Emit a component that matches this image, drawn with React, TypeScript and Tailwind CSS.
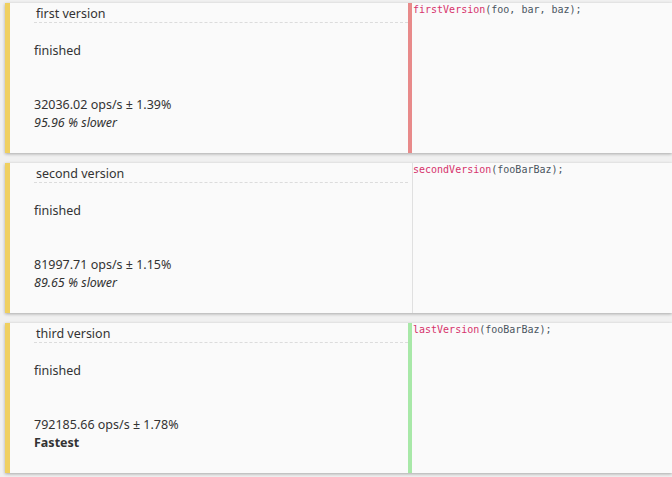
const results = [
    {
        title: 'first version',
        fn: 'firstVersion',
        args: 'foo, bar, baz',
        ops: '32036.02 ops/s ± 1.39%',
        note: '95.96 % slower',
        fastest: false,
        bar: 'border-l-[#e88a8a]',
    },
    {
        title: 'second version',
        fn: 'secondVersion',
        args: 'fooBarBaz',
        ops: '81997.71 ops/s ± 1.15%',
        note: '89.65 % slower',
        fastest: false,
        bar: 'border-l-[#fafafa]',
    },
    {
        title: 'third version',
        fn: 'lastVersion',
        args: 'fooBarBaz',
        ops: '792185.66 ops/s ± 1.78%',
        note: 'Fastest',
        fastest: true,
        bar: 'border-l-[#a8e8a8]',
    },
]

const App = () => {
    return (
        <div className="h-[477px] w-[672px] overflow-hidden bg-[#f0f0f0] pt-[3px] pl-[5px] font-['Noto_Sans',sans-serif] text-[12.5px] text-[#333]">
            <div className="flex flex-col gap-[10px]">
                {results.map((r, i) => (
                    <div
                        key={r.title}
                        className="flex h-[150px] border-l-[5px] border-[#f0d060] bg-[#fafafa] shadow-[0_1px_3px_rgba(0,0,0,0.3)]"
                    >
                        <div className="flex w-[398px] shrink-0 flex-col pl-6">
                            <div className="border-b border-dashed border-[#dcdcdc] pt-[2px] pl-[2px] leading-[17px]">
                                {r.title}
                            </div>
                            <div className="mt-[19px] leading-[18px]">finished</div>
                            <div className="mt-[36px] leading-[18px]">{r.ops}</div>
                            {r.fastest ? (
                                <div className="font-bold leading-[18px]">{r.note}</div>
                            ) : (
                                <div className="italic leading-[18px]">{r.note}</div>
                            )}
                        </div>
                        <div className={`flex-1 border-l-4 ${r.bar}`}>
                            <div
                                className={`h-full font-['DejaVu_Sans_Mono',monospace] text-[10px] leading-[13px] text-[#4a5560] ${i === 1 ? 'border-l border-[#e0e0e0]' : 'pl-px'}`}
                            >
                                <span className="text-[#d6336c]">{r.fn}</span>({r.args});
                            </div>
                        </div>
                    </div>
                ))}
            </div>
        </div>
    )
}

export default App
